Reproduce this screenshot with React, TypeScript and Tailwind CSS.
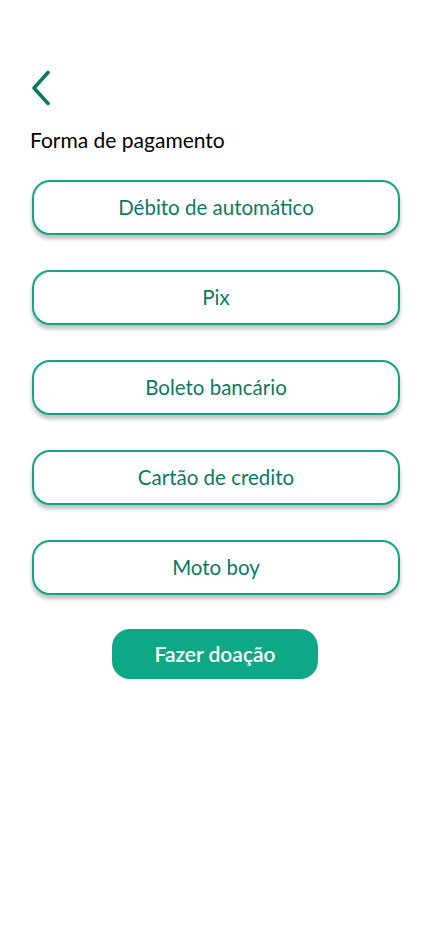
const options = ['Débito de automático', 'Pix', 'Boleto bancário', 'Cartão de credito', 'Moto boy']

export default function App() {
  return (
    <div className="min-h-[932px] w-[430px] bg-white font-['Lato',sans-serif]">
      <div className="pt-[70px] pl-[30px]">
        <button className="block text-[#0b7a63]" aria-label="Voltar">
          <svg width="22" height="36" viewBox="0 0 22 36" fill="none" stroke="currentColor" strokeWidth="3.6" strokeLinecap="round" strokeLinejoin="round">
            <path d="M18 2.5 L4 18 L18 33.5" />
          </svg>
        </button>
      </div>
      <h1 className="mt-[20px] pl-[30px] text-[21px] leading-[28px] text-black">Forma de pagamento</h1>
      <div className="mt-[26px] px-[32px] flex flex-col gap-[35px]">
        {options.map((opt) => (
          <button
            key={opt}
            className="h-[55px] w-[368px] rounded-[18px] border-2 border-[#12a585] bg-white text-[20.5px] text-[#0b7a63] shadow-[0_4px_4px_rgba(0,0,0,0.25)]"
          >
            {opt}
          </button>
        ))}
      </div>
      <div className="mt-[34px] flex justify-center">
        <button className="h-[50px] w-[206px] rounded-[18px] bg-[#0fa886] text-[21px] font-semibold text-white">
          Fazer doação
        </button>
      </div>
    </div>
  )
}
